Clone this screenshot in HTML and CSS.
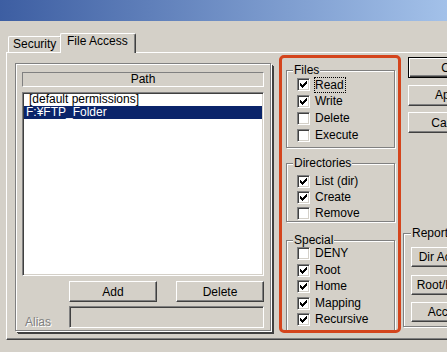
FILE: index.html
```html
<!DOCTYPE html>
<html lang="en">
<head>
    <meta charset="UTF-8">
    <title>File Access</title>
    <link rel="stylesheet" href="styles.css">
</head>
<body>
    <div class="titlebar"></div>

    <!-- Tabs -->
    <div class="tabs">
        <div class="tab">Security</div>
        <div class="tab active">File Access</div>
    </div>

    <div class="panel">
        <!-- Path list -->
        <div class="pathframe">
            <div class="colhead">Path</div>
            <div class="list">
                <div class="item first">[default permissions]</div>
                <div class="item selected">F:¥FTP_Folder</div>
            </div>
            <div class="buttons">
                <button class="btn">Add</button>
                <button class="btn">Delete</button>
            </div>
            <div class="alias-row">
                <span class="disabled">Alias</span>
                <div class="alias"></div>
            </div>
        </div>

        <!-- Permissions -->
        <div class="highlight">
            <fieldset class="group files">
                <legend>Files</legend>
                <div class="check"><span class="cb"><svg class="tick" viewBox="0 0 11 11" shape-rendering="crispEdges"><path d="M2 4h1v3h-1zM3 5h1v3h-1zM4 6h1v3h-1zM5 5h1v3h-1zM6 4h1v3h-1zM7 3h1v3h-1zM8 2h1v3h-1z"/></svg></span><span class="focus">Read</span></div>
                <div class="check"><span class="cb"><svg class="tick" viewBox="0 0 11 11" shape-rendering="crispEdges"><path d="M2 4h1v3h-1zM3 5h1v3h-1zM4 6h1v3h-1zM5 5h1v3h-1zM6 4h1v3h-1zM7 3h1v3h-1zM8 2h1v3h-1z"/></svg></span><span class="text">Write</span></div>
                <div class="check"><span class="cb"></span><span class="text">Delete</span></div>
                <div class="check"><span class="cb"></span><span class="text">Execute</span></div>
            </fieldset>

            <fieldset class="group dirs">
                <legend>Directories</legend>
                <div class="check"><span class="cb"><svg class="tick" viewBox="0 0 11 11" shape-rendering="crispEdges"><path d="M2 4h1v3h-1zM3 5h1v3h-1zM4 6h1v3h-1zM5 5h1v3h-1zM6 4h1v3h-1zM7 3h1v3h-1zM8 2h1v3h-1z"/></svg></span><span class="text">List (dir)</span></div>
                <div class="check"><span class="cb"><svg class="tick" viewBox="0 0 11 11" shape-rendering="crispEdges"><path d="M2 4h1v3h-1zM3 5h1v3h-1zM4 6h1v3h-1zM5 5h1v3h-1zM6 4h1v3h-1zM7 3h1v3h-1zM8 2h1v3h-1z"/></svg></span><span class="text">Create</span></div>
                <div class="check"><span class="cb"></span><span class="text">Remove</span></div>
            </fieldset>

            <fieldset class="group special">
                <legend>Special</legend>
                <div class="check"><span class="cb"></span><span class="text">DENY</span></div>
                <div class="check"><span class="cb"><svg class="tick" viewBox="0 0 11 11" shape-rendering="crispEdges"><path d="M2 4h1v3h-1zM3 5h1v3h-1zM4 6h1v3h-1zM5 5h1v3h-1zM6 4h1v3h-1zM7 3h1v3h-1zM8 2h1v3h-1z"/></svg></span><span class="text">Root</span></div>
                <div class="check"><span class="cb"><svg class="tick" viewBox="0 0 11 11" shape-rendering="crispEdges"><path d="M2 4h1v3h-1zM3 5h1v3h-1zM4 6h1v3h-1zM5 5h1v3h-1zM6 4h1v3h-1zM7 3h1v3h-1zM8 2h1v3h-1z"/></svg></span><span class="text">Home</span></div>
                <div class="check"><span class="cb"><svg class="tick" viewBox="0 0 11 11" shape-rendering="crispEdges"><path d="M2 4h1v3h-1zM3 5h1v3h-1zM4 6h1v3h-1zM5 5h1v3h-1zM6 4h1v3h-1zM7 3h1v3h-1zM8 2h1v3h-1z"/></svg></span><span class="text">Mapping</span></div>
                <div class="check"><span class="cb"><svg class="tick" viewBox="0 0 11 11" shape-rendering="crispEdges"><path d="M2 4h1v3h-1zM3 5h1v3h-1zM4 6h1v3h-1zM5 5h1v3h-1zM6 4h1v3h-1zM7 3h1v3h-1zM8 2h1v3h-1z"/></svg></span><span class="text">Recursive</span></div>
            </fieldset>
        </div>

        <!-- Dialog buttons -->
        <div class="side">
            <button class="btn default">OK</button>
            <button class="btn">Apply</button>
            <button class="btn">Cancel</button>
            <fieldset class="group reports">
                <legend>Reports</legend>
                <button class="btn">Dir Access</button>
                <button class="btn">Root/Home</button>
                <button class="btn">Access</button>
            </fieldset>
        </div>
    </div>
</body>
</html>
```

FILE: styles.css
```css
body {
    margin: 0;
    width: 447px;
    height: 352px;
    overflow: hidden;
    background-color: #d4d0c8;
    font-family: "Liberation Sans", Arial, sans-serif;
    font-size: 12px;
    color: #000;
}

.titlebar {
    height: 21px;
    background: linear-gradient(to right, #3d5ea2, #a3c1e9);
}

/* Tabs */
.tabs {
    display: flex;
    align-items: flex-end;
    height: 20px;
    margin: 12px 0 -1px 8px;
    position: relative;
    z-index: 1;
}

.tab {
    box-sizing: border-box;
    width: 54px;
    height: 16px;
    margin-bottom: 1px;
    padding: 0 0 0 4px;
    line-height: 14px;
    border: 1px solid #fff;
    border-bottom: none;
    border-right-color: #404040;
    border-radius: 2px 2px 0 0;
    box-shadow: inset -1px 0 #808080;
    white-space: nowrap;
}

.tab.active {
    width: 76px;
    height: 20px;
    margin: 0 0 0 -2px;
    padding-left: 6px;
    background-color: #d4d0c8;
}

.panel {
    display: flex;
    align-items: flex-start;
    box-sizing: border-box;
    width: 540px;
    height: 288px;
    margin-left: 6px;
    padding: 2px 0 0 8px;
    border: 1px solid #fff;
    border-right-color: #404040;
    border-bottom-color: #404040;
    box-shadow: inset -1px -1px #808080;
}

.panel > * {
    flex-shrink: 0;
}

/* Path list */
.pathframe {
    box-sizing: border-box;
    width: 256px;
    height: 268px;
    margin-top: 8px;
    padding: 8px 0 0 6px;
    border: 1px solid #808080;
    box-shadow: inset 1px 1px #fff, 1px 1px #fff, 2px 2px #404040, 3px 3px #404040;
}

.colhead {
    box-sizing: border-box;
    width: 242px;
    height: 15px;
    line-height: 13px;
    text-align: center;
    border: 1px solid;
    border-color: #808080 #fff #fff #808080;
}

.list {
    box-sizing: border-box;
    width: 242px;
    height: 184px;
    margin-top: 5px;
    padding: 1px;
    background-color: #fff;
    border: 1px solid;
    border-color: #808080 #fff #fff #808080;
    box-shadow: inset 1px 1px #404040, inset -1px -1px #d4d0c8;
}

.item {
    height: 13px;
    line-height: 13px;
    padding-left: 2px;
    white-space: nowrap;
}

.item.first {
    margin-top: -1px;
    padding-left: 5px;
}

.item.selected {
    background-color: #0a246a;
    color: #fff;
}

.buttons {
    display: flex;
    gap: 19px;
    margin: 5px 0 0 47px;
}

.btn {
    box-sizing: border-box;
    width: 88px;
    height: 21px;
    padding: 0;
    font: inherit;
    color: #000;
    background-color: #d4d0c8;
    border: 1px solid;
    border-color: #fff #404040 #404040 #fff;
    box-shadow: inset -1px -1px #808080;
    white-space: nowrap;
}

.btn.default {
    border-color: #000;
    box-shadow: inset 1px 1px #fff, inset -1px -1px #404040, inset -2px -2px #808080;
}

.alias-row {
    display: flex;
    margin-top: 4px;
}

.disabled {
    width: 44px;
    padding: 9px 0 0 3px;
    line-height: 14px;
    color: #808080;
    text-shadow: 1px 1px #fff;
}

.alias {
    box-sizing: border-box;
    width: 195px;
    height: 22px;
    border: 1px solid;
    border-color: #808080 #fff #fff #808080;
    box-shadow: inset 1px 1px #404040;
}

/* Permissions */
.highlight {
    box-sizing: border-box;
    width: 122px;
    height: 278px;
    margin-left: 8px;
    padding: 6px 3px 0 4px;
    border: 3px solid #d4441c;
    border-radius: 5px;
    overflow: hidden;
}

.group {
    margin: 0;
    padding: 0 0 0 10px;
    border: 1px solid #808080;
    box-shadow: inset 1px 1px #fff, 1px 1px #fff;
}

.group legend {
    margin-left: -4px;
    padding: 0 1px;
    line-height: 13px;
    background-color: #d4d0c8;
}

.files {
    padding-top: 1px;
    padding-bottom: 5px;
}

.dirs {
    margin-top: 9px;
    padding-top: 5px;
    padding-bottom: 1px;
}

.special {
    margin-top: 12px;
    padding-bottom: 6px;
}

.check {
    display: flex;
    align-items: center;
    height: 13px;
    white-space: nowrap;
}

.files .check + .check {
    margin-top: 4px;
}

.dirs .check + .check {
    margin-top: 3px;
}

.special .check + .check {
    margin-top: 3.5px;
}

.cb {
    box-sizing: border-box;
    width: 13px;
    height: 13px;
    flex-shrink: 0;
    background-color: #fff;
    border: 1px solid;
    border-color: #808080 #fff #fff #808080;
    box-shadow: inset 1px 1px #404040, inset -1px -1px #d4d0c8;
}

.tick {
    display: block;
    width: 11px;
    height: 11px;
}

.text {
    margin-left: 5px;
    line-height: 13px;
}

.focus {
    margin-left: 4px;
    padding-right: 1px;
    line-height: 14px;
    border: 1px dotted #000;
}

/* Dialog buttons */
.side {
    display: flex;
    flex-direction: column;
    align-items: flex-start;
    box-sizing: border-box;
    width: 110px;
    height: 278px;
    margin-left: 2px;
    padding-top: 2px;
}

.side > .btn {
    width: 84px;
    margin-left: 5px;
}

.side > .btn + .btn {
    margin-top: 6.5px;
}

.reports {
    box-sizing: border-box;
    width: 100px;
    margin-top: auto;
    margin-bottom: 6px;
    padding: 7px 0 4px 7px;
}

.reports legend {
    margin-left: 0;
}

.reports .btn {
    display: block;
    width: 72px;
    height: 20px;
}

.reports .btn + .btn {
    margin-top: 7.5px;
}
```
